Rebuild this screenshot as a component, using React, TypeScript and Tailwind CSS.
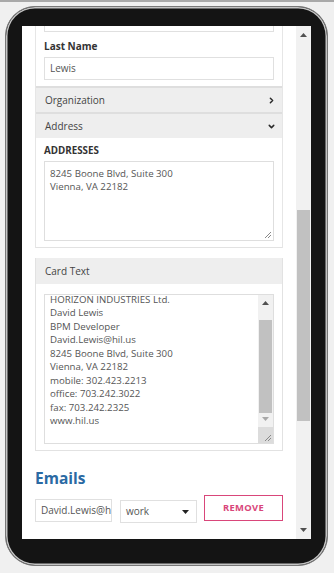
import { ChevronRight, ChevronDown } from "lucide-react";

const CARD_LINES = [
  "HORIZON INDUSTRIES Ltd.",
  "David Lewis",
  "BPM Developer",
  "David.Lewis@hil.us",
  "8245 Boone Blvd, Suite 300",
  "Vienna, VA 22182",
  "mobile: 302.423.2213",
  "office: 703.242.3022",
  "fax: 703.242.2325",
  "www.hil.us",
];

const Resizer = () => (
  <svg width="9" height="9" viewBox="0 0 9 9" className="block">
    <path d="M8 2 L2 8 M8 5 L5 8" stroke="#888" strokeWidth="1" />
  </svg>
);

const UpArrow = () => (
  <svg width="7" height="4" viewBox="0 0 7 4" className="block">
    <path d="M0 4 L3.5 0 L7 4 Z" fill="#505050" />
  </svg>
);

const DownArrow = ({ color = "#505050" }: { color?: string }) => (
  <svg width="7" height="4" viewBox="0 0 7 4" className="block">
    <path d="M0 0 L7 0 L3.5 4 Z" fill={color} />
  </svg>
);

const SectionHeader = ({ title, open }: { title: string; open?: boolean }) => (
  <div className="flex h-[26px] items-center justify-between border-t-2 border-[#dedede] bg-[#eeeeee] pl-[9px] pr-[6px] text-[10px] text-[#444]">
    <span>{title}</span>
    {open ? (
      <ChevronDown size={9} strokeWidth={4} color="#2a2a2a" />
    ) : (
      <ChevronRight size={9} strokeWidth={4} color="#2a2a2a" />
    )}
  </div>
);

export default function App() {
  return (
    <div
      className="h-[573px] w-[334px] overflow-hidden border-t-2 border-[#a9a9a9] bg-[#f0f0f0]"
      style={{ fontFamily: '"Open Sans", "Liberation Sans", sans-serif' }}
    >
      <div className="ml-[5px] mt-[4px] h-[560px] w-[323px] rounded-[30px] border border-[#777] bg-[#141414] pb-[26px] pl-[16px] pr-[16px] pt-[19px] shadow-[inset_0_0_0_1.5px_#c4c4c4]">
        <div className="flex h-[513px] w-[289px] bg-white">
          {/* page content */}
          <div className="h-full w-[274px] overflow-hidden">
            <div className="mx-[13px] border-x border-[#e6e6e6]">
              <div className="px-[8px]">
                <div className="h-[6px] border-x border-b border-[#e0e0e0]" />
                <div className="mt-[7px] text-[10px] font-bold leading-[14px] text-[#333]">
                  Last Name
                </div>
                <div className="mt-[4px] flex h-[23px] items-center border border-[#e0e0e0] px-[5px] text-[10px] text-[#555]">
                  Lewis
                </div>
              </div>
              <div className="mt-[6px]">
                <SectionHeader title="Organization" />
                <SectionHeader title="Address" open />
              </div>
              <div className="border-b border-[#e2e2e2] px-[8px] pb-[6px] pt-[6px]">
                <div className="text-[9.8px] font-bold leading-[14px] text-[#333]">ADDRESSES</div>
                <div className="relative mt-[3px] h-[80px] border border-[#dedede] px-[5px] pt-[5px] text-[9.7px] leading-[13.4px] text-[#555]">
                  <div>8245 Boone Blvd, Suite 300</div>
                  <div>Vienna, VA 22182</div>
                  <div className="absolute bottom-[1px] right-[1px]">
                    <Resizer />
                  </div>
                </div>
              </div>
            </div>

            <div className="mx-[13px] mt-[10px] border-x border-b border-[#e2e2e2]">
              <div className="flex h-[26px] items-center bg-[#eeeeee] px-[9px] text-[10px] text-[#444]">
                Card Text
              </div>
              <div className="px-[8px] pb-[6px] pt-[10px]">
                <div className="flex h-[150px] overflow-hidden border border-[#dedede]">
                  <div className="-mt-[2px] flex-1 pl-[5px] text-[9.7px] leading-[13.45px] text-[#555]">
                    {CARD_LINES.map((line) => (
                      <div key={line}>{line}</div>
                    ))}
                  </div>
                  <div className="flex w-[15px] flex-col bg-[#f1f1f1]">
                    <div className="flex h-[16px] items-center justify-center">
                      <UpArrow />
                    </div>
                    <div className="mx-[1px] mt-[9px] h-[93px] bg-[#c1c1c1]" />
                    <div className="flex h-[12px] items-center justify-center">
                      <DownArrow color="#a8a8a8" />
                    </div>
                    <div className="mt-auto flex h-[16px] items-end justify-end bg-[#dcdcdc] p-[1px]">
                      <Resizer />
                    </div>
                  </div>
                </div>
              </div>
            </div>

            <div className="mx-[13px] mt-[17px]">
              <div className="text-[15.5px] font-bold leading-[20px] text-[#2b6aa3]">Emails</div>
              <div className="mt-[7px] flex items-start">
                <div className="mt-[4px] h-[23px] w-[77px] overflow-hidden whitespace-nowrap border border-[#e0e0e0] px-[5px] text-[10px] leading-[21px] text-[#555]">
                  David.Lewis@hil.us
                </div>
                <div className="ml-[8px] mt-[5px] flex h-[23px] w-[77px] items-center justify-between border border-[#e0e0e0] pl-[5px] pr-[7px] text-[10px] text-[#555]">
                  <span>work</span>
                  <DownArrow color="#222" />
                </div>
                <div className="ml-[7px] flex h-[26px] w-[79px] items-center justify-center border border-[#d9467a] text-[9.4px] font-bold tracking-[0.3px] text-[#d9467a]">
                  REMOVE
                </div>
              </div>
              <div className="mt-[12px] text-[15.5px] font-bold leading-[20px] text-[#2b6aa3]">
                Phone Numbers
              </div>
            </div>
          </div>

          {/* main scrollbar */}
          <div className="flex h-full w-[15px] flex-col bg-[#f1f1f1]">
            <div className="flex h-[18px] items-center justify-center">
              <UpArrow />
            </div>
            <div className="mx-[1px] mt-[166px] h-[211px] bg-[#c1c1c1]" />
            <div className="mt-auto flex h-[18px] items-center justify-center">
              <DownArrow />
            </div>
          </div>
        </div>
      </div>
    </div>
  );
}
